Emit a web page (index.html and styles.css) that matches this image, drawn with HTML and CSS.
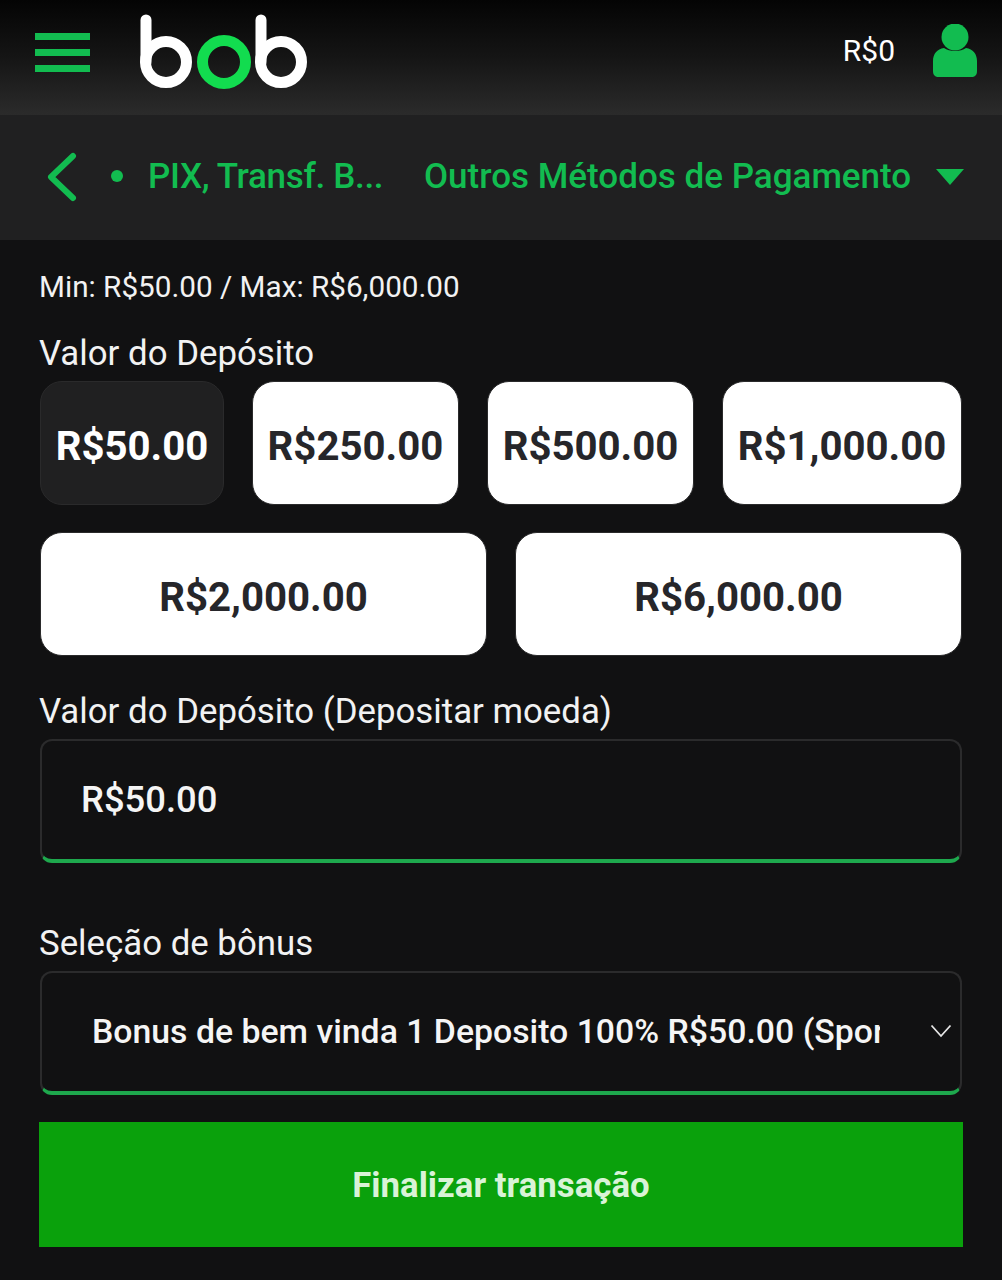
FILE: index.html
```html
<!DOCTYPE html>
<html lang="pt-BR">
<head>
<meta charset="utf-8">
<title>Depósito</title>
<link rel="stylesheet" href="styles.css">
</head>
<body>
<header class="topbar">
  <div class="menu-icon"><span></span><span></span><span></span></div>
  <svg class="logo" width="172" height="78" viewBox="0 0 172 78" aria-label="bob">
    <g fill="none" stroke-width="11" stroke-linecap="round">
      <path stroke="#fff" d="M6 6V48"/>
      <circle stroke="#fff" cx="26" cy="48" r="20.500"/>
      <path stroke="#fff" d="M121 6V48"/>
      <circle stroke="#fff" cx="141" cy="48" r="20.500"/>
      <circle stroke="#12dc4f" cx="84" cy="48" r="21.500"/>
    </g>
  </svg>
  <div class="balance">R$0</div>
  <svg class="user-icon" width="44" height="53" viewBox="0 0 44 53" aria-hidden="true">
    <circle cx="22" cy="13" r="13.500" fill="#12bc50"/>
    <path fill="#12bc50" d="M11 24c5 4 17 4 22 0 7 1 11 6 11 13v10c0 4-2 6-6 6H6c-4 0-6-2-6-6V37c0-7 4-12 11-13z"/>
  </svg>
</header>

<nav class="subbar">
  <svg class="back" width="32" height="50" viewBox="0 0 32 50" aria-hidden="true">
    <path d="M27 4L5 25l22 21" fill="none" stroke="#12bc50" stroke-width="6" stroke-linecap="round" stroke-linejoin="round"/>
  </svg>
  <span class="dot"></span>
  <span class="method">PIX, Transf. B...</span>
  <span class="others">Outros Métodos de Pagamento</span>
  <span class="caret"></span>
</nav>

<main class="content">
  <p class="limits">Min: R$50.00 / Max: R$6,000.00</p>
  <p class="label label-amounts">Valor do Depósito</p>
  <div class="amounts amounts-first">
    <div class="amount active">R$50.00</div>
    <div class="amount">R$250.00</div>
    <div class="amount">R$500.00</div>
    <div class="amount">R$1,000.00</div>
  </div>
  <div class="amounts amounts-wide">
    <div class="amount wide">R$2,000.00</div>
    <div class="amount wide">R$6,000.00</div>
  </div>
  <p class="label label-input">Valor do Depósito (Depositar moeda)</p>
  <div class="field input-field"><span class="field-value">R$50.00</span></div>
  <p class="label label-bonus">Seleção de bônus</p>
  <div class="field select-field">
    <span class="select-text">Bonus de bem vinda 1 Deposito 100% R$50.00 (Sports)</span>
    <svg class="select-arrow" width="22" height="14" viewBox="0 0 22 14" aria-hidden="true">
      <path d="M1.500 1.500L11 12l9.500-10.500" fill="none" stroke="#e6e6e6" stroke-width="1.800"/>
    </svg>
  </div>
  <div class="submit">Finalizar transação</div>
</main>
</body>
</html>
```

FILE: styles.css
```css
* { box-sizing: border-box; }

html, body { margin: 0; padding: 0; }

body {
  width: 1002px;
  height: 1280px;
  overflow: hidden;
  background: #111112;
  color: #f2f2f2;
  font-family: Roboto, "Liberation Sans", sans-serif;
}

p { margin: 0; }

.topbar {
  height: 115px;
  display: flex;
  align-items: flex-start;
  padding: 0 25px 0 35px;
  background: linear-gradient(180deg, #040404 0%, #151515 50%, #2b2b2b 100%);
}

.menu-icon {
  width: 55px;
  margin-top: 33px;
  display: flex;
  flex-direction: column;
  gap: 9.500px;
}

.menu-icon span {
  height: 6.500px;
  background: #12bc50;
}

.logo {
  margin: 14px 0 0 50px;
}

.balance {
  margin: 34px 0 0 auto;
  font-size: 30px;
  line-height: 34px;
  color: #fff;
}

.user-icon {
  margin: 24px 0 0 38px;
}

.subbar {
  height: 125px;
  display: flex;
  align-items: center;
  padding: 0 0 2px 46px;
  background: #202021;
  color: #12bc50;
  font-size: 35px;
  font-weight: 500;
}

.back { margin-top: 1px; }

.dot {
  width: 12px;
  height: 12px;
  margin: 0 0 1px 33px;
  border-radius: 50%;
  background: #12bc50;
}

.method { margin-left: 25px; width: 276px; letter-spacing: -0.32px; }

.caret {
  width: 0;
  height: 0;
  margin: 0 0 0 25px;
  border-left: 14px solid transparent;
  border-right: 14px solid transparent;
  border-top: 16px solid #12bc50;
}

.content { padding: 0 40px; }

.limits {
  margin: 30px 0 0 -1px;
  font-size: 29.700px;
  line-height: 34px;
}

.label {
  margin-left: -1px;
  font-size: 34.800px;
  line-height: 40px;
}

.label-amounts { margin-top: 29px; }

.amounts {
  display: flex;
  gap: 28px;
}

.amounts-first { margin-top: 8px; }

.amounts-wide { margin-top: 27px; }

.amount {
  flex: 1 1 auto;
  height: 124px;
  padding: 7px 14px 0;
  display: flex;
  align-items: center;
  justify-content: center;
  border-radius: 22px;
  border: 1px solid #2a2a2b;
  background: #fff;
  color: #26262a;
  font-size: 40.200px;
  font-weight: 700;
}

.amount.active {
  background: #202021;
  color: #fff;
}

.amount.wide { flex: 1 1 0; }

.label-input { margin-top: 35px; }

.field {
  height: 124px;
  display: flex;
  align-items: center;
  border: 2px solid #2b2b2c;
  border-bottom: 4px solid #1ea84d;
  border-radius: 12px;
  color: #f5f5f5;
}

.input-field {
  margin-top: 8px;
  padding-left: 39px;
  font-size: 36.400px;
  font-weight: 500;
}

.field-value { margin-bottom: 2px; }

.label-bonus { margin-top: 60px; }

.select-field {
  margin-top: 8px;
  padding: 0 0 2px 50px;
  font-size: 33.800px;
  font-weight: 500;
}

.select-text {
  width: 788px;
  overflow: hidden;
  white-space: nowrap;
}

.select-arrow { margin-left: 50px; }

.submit {
  height: 125px;
  margin: 27px -1px 0;
  display: flex;
  align-items: center;
  justify-content: center;
  background: #0aa10c;
  color: #d9f3d7;
  font-size: 34.800px;
  font-weight: 700;
}
```
